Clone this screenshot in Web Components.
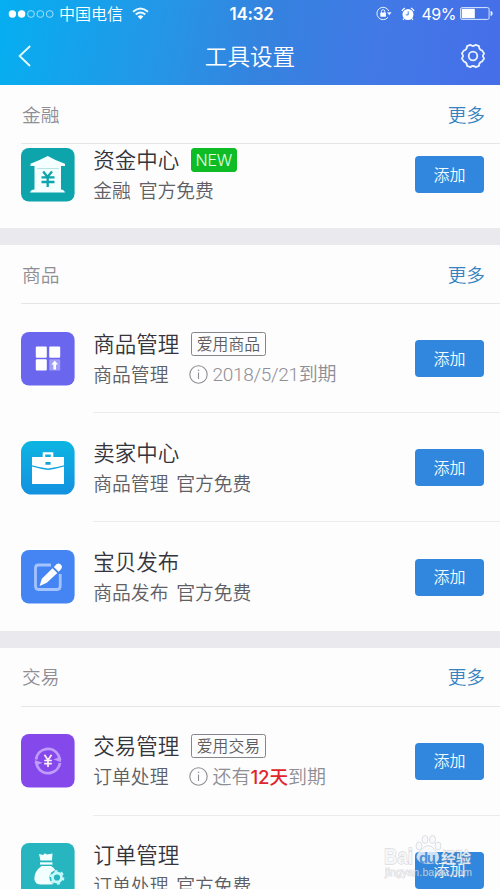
<!DOCTYPE html>
<html lang="zh-CN">
<head>
<meta charset="utf-8">
<title>工具设置</title>
<style>
html,body{margin:0;height:100%;overflow:hidden}
body{width:500px;height:889px;position:relative;background:#fdfdfd;font-family:"Noto Sans CJK SC DemiLight","Noto Sans CJK SC","Liberation Sans",sans-serif;font-weight:350}
main{height:889px;overflow:hidden}
</style>
</head>
<body>
<main>
<app-header heading="工具设置"></app-header>
<tool-section heading="金融">
  <tool-row icon="bank" heading="资金中心" sub="金融 官方免费" style="--top:4px;--h:84px" last><tool-badge slot="badge" solid>NEW</tool-badge></tool-row>
</tool-section>
<tool-section heading="商品">
  <tool-row icon="grid" heading="商品管理" sub="商品管理"><tool-badge slot="badge">爱用商品</tool-badge><expiry-note slot="note" style="letter-spacing:-.28px">2018/5/21到期</expiry-note></tool-row>
  <tool-row icon="case" heading="卖家中心" sub="商品管理 官方免费"></tool-row>
  <tool-row icon="edit" heading="宝贝发布" sub="商品发布 官方免费" style="--h:108.6px" last></tool-row>
</tool-section>
<tool-section heading="交易">
  <tool-row icon="trade" heading="交易管理" sub="订单处理" style="--top:27.3px;--h:109px"><tool-badge slot="badge">爱用交易</tool-badge><expiry-note slot="note">还有<b style="color:#e0252d;font:500 18.6px/30px Inter,'Noto Sans CJK SC',sans-serif;letter-spacing:-.1px">12天</b>到期</expiry-note></tool-row>
  <tool-row icon="bag" heading="订单管理" sub="订单处理 官方免费" style="--top:27.3px" last></tool-row>
</tool-section>
</main>
<water-mark></water-mark>
<script>
const define=(name,html,fill)=>customElements.define(name,class extends HTMLElement{
  connectedCallback(){
    if(this.shadowRoot)return;
    const t=document.createElement('template');
    t.innerHTML=html;
    const r=this.attachShadow({mode:'open'});
    r.append(t.content.cloneNode(true));
    r.querySelectorAll('[data-a]').forEach(e=>e.textContent=this.getAttribute(e.dataset.a)||'');
    if(fill)fill(this,r);
  }
});

define('status-bar',`<style>
:host{display:grid;grid-template-columns:1fr auto 1fr;align-items:center;height:28px;padding:0 3px 0 8px;color:#fff}
.l,.r{display:flex;align-items:center}.r{justify-content:flex-end}
svg{display:block;flex:none}
.c{font-size:16px;line-height:26px;padding-bottom:2px;margin-left:5px}
.t{font:600 17px/28px Inter,"Liberation Sans",sans-serif;letter-spacing:-.25px;margin-right:2px}
.p{font:400 16px/28px Inter,"Liberation Sans",sans-serif;margin:0 4px 0 7px;letter-spacing:-.5px}
</style>
<div class="l"><svg width="46" height="10" viewBox="0 0 46 10" fill="none" stroke="#c9efff" stroke-width=".8"><circle cx="4.4" cy="5" r="3.7" fill="#fff" stroke="none"/><circle cx="13.6" cy="5" r="3.7" fill="#fff" stroke="none"/><circle cx="23" cy="5" r="3.4"/><circle cx="32.3" cy="5" r="3.4"/><circle cx="41.7" cy="5" r="3.4"/></svg>
<span class="c">中国电信</span>
<svg style="margin:-2px 0 0 9px" width="17" height="13" viewBox="0 0 17 13" fill="none" stroke="#e6faff" stroke-width="1.9"><path d="M1 4.8Q8.5-1.8 16 4.8M3.7 7.5Q8.5 3.4 13.3 7.5"/><path d="M5.7 9.5Q8.5 7.2 11.3 9.5L8.5 12.4Z" fill="#fff" stroke="none"/></svg></div>
<span class="t">14:32</span>
<div class="r"><svg style="margin-top:-1px" width="16" height="15" viewBox="0 0 16 15" fill="none" stroke="#e8f3ff" stroke-width="1"><path d="M12.8 5A6.2 6.2 0 1 0 12 11.3"/><path d="M11 6.2h4.6l-2.3 3z" fill="#e8f3ff" stroke="none"/><rect x="4.3" y="6.6" width="5.6" height="4.2" rx=".5" fill="#fff" stroke="none"/><path d="M5.4 7V5.4a1.7 1.7 0 0 1 3.4 0V7"/></svg>
<svg style="margin:-1px 0 0 9px" width="14" height="14" viewBox="0 0 14 14"><circle cx="7" cy="7.5" r="5.5" fill="#fff"/><path d="M.9 4A7.6 7.6 0 0 1 4 1.1M10 1.1A7.6 7.6 0 0 1 13.1 4M3.3 11.4 2 13M10.7 11.4 12 13" stroke="#fff" stroke-width="1.1" fill="none"/><path d="M7.2 4.3v3.6H4.8" fill="none" stroke="#3f7fe2" stroke-width="1"/></svg>
<span class="p">49%</span>
<svg style="margin-top:-1px" width="37" height="13" viewBox="0 0 37 13"><rect x=".6" y=".6" width="28.5" height="11.8" rx="1.5" fill="none" stroke="#d8e8ff"/><rect x="1.8" y="1.8" width="13" height="9.4" fill="#fff"/><path d="M30.6 4.1q2 0 2 2.4t-2 2.4z" fill="#e8f3ff"/></svg></div>`);

define('app-header',`<style>
:host{display:flex;flex-direction:column;height:85px;background:linear-gradient(100deg,#05aff1 0%,#2794e6 35%,#3483df 52%,#4279e6 75%,#466ee9 100%);color:#fff}
.nav{height:57px;display:grid;grid-template-columns:1fr auto 1fr;align-items:center;padding:0 14px 0 18px}
svg{display:block;margin-top:-1px}.g{justify-self:end}
h1{font-size:22.6px;line-height:30px;font-weight:inherit;margin:0 4px 0 0;padding-bottom:2px}
</style><status-bar></status-bar><div class="nav"><svg width="14" height="22" viewBox="0 0 14 22" fill="none" stroke="#e7fbff" stroke-width="1.8"><path d="M12.2 1 1.6 11 12 21"/></svg><h1 data-a="heading"></h1><svg class="g" width="26" height="26" viewBox="0 0 26 26" fill="none" stroke="#e9f2ff" stroke-width="1.8" stroke-linejoin="round"><circle cx="13" cy="13" r="4.3"/><path d="M10.3 1.8Q13 4.1 15.7 1.8L19 3.2Q19 6.8 22.3 7.6L24.2 10.7Q21.6 13 24.2 15.3L22.3 18.4Q19 19.2 19 22.8L15.7 24.2Q13 21.9 10.3 24.2L7 22.8Q7 19.2 3.7 18.4L1.8 15.3Q4.4 13 1.8 10.7L3.7 7.6Q7 6.8 7 3.2Z"/></svg></div>`);

define('tool-section',`<style>
:host{display:block;border-bottom:17px solid #e9e9ee}
header{display:flex;justify-content:space-between;align-items:center;box-sizing:border-box;height:59px;margin-left:21px;padding:0 15px 1px 1px;font-size:18.7px;line-height:28px;color:#8e8e94;border-bottom:1px solid #e6e6e8}
.m{color:#3583c0}
</style><header><span data-a="heading"></span><span class="m">更多</span></header><slot></slot>`);

define('tool-badge',`<style>
:host{display:inline-flex;align-items:center;justify-content:center;box-sizing:border-box;height:24px;padding:0 5px 1px;border:1px solid #85858c;border-radius:2.5px;font-size:15.8px;line-height:20px;color:#5c5c63}
:host([solid]){background:#0ebc25;border-color:#0ebc25;color:#e4ffe5;font-family:Inter,sans-serif;font-size:16px;letter-spacing:-.2px;width:46px;padding:0;border-radius:3px}
</style><slot></slot>`);

define('expiry-note',`<style>
:host{display:inline-flex;align-items:center;color:#8e8e94;font-family:Roboto,"Noto Sans CJK SC",sans-serif;font-size:19px;line-height:30px;margin-left:21px;padding-top:2px;white-space:nowrap}
svg{margin-right:4px;margin-top:-2px}
</style><svg width="19" height="19" viewBox="0 0 19 19" fill="none" stroke="#8e8e94" stroke-width="1.1"><circle cx="9.5" cy="9.5" r="8.7"/><path d="M9.5 7.5v6.5"/><circle cx="9.5" cy="5.2" r=".8" fill="#8e8e94" stroke="none"/></svg><span><slot></slot></span>`);

define('add-button',`<style>
:host{display:flex;align-items:center;justify-content:center;box-sizing:border-box;width:69px;height:37px;padding-bottom:1.5px;border-radius:4px;background:#3087dd;color:#f1fbff;font-size:16px;line-height:24px}
</style><span>添加</span>`);

const icons={
bank:['#0da4ab','<g fill="#f4ffff"><path d="M26.8 8Q18 12.5 9.5 15.8V18H44v-2.2Q34 12.3 26.8 8Z"/><path d="M13.5 18H40V42H13.5Z"/><path d="M9 44.5q1-3 4-3h27q3 0 4 3Z"/></g><path d="M16 20.5h22" stroke="#b6e4e4" fill="none"/><path d="M22.2 23.5l4.3 5.5 4.5-5.5M20.5 29.3h13M20.5 34h13M26.7 28.5v10.5" stroke="#0da4ab" stroke-width="2.3" fill="none"/>'],
grid:['#6b66ee','<g fill="#fff"><rect x="14.8" y="14.5" width="11" height="11.3" rx="1"/><rect x="28.2" y="14.5" width="11" height="11.3" rx="1"/><rect x="14.8" y="27.3" width="11" height="11.3" rx="1"/></g><rect x="28.2" y="27.3" width="11" height="11.3" rx="1" fill="#a09df7"/><path d="M33.7 28.6l3.3 4h-2v4.8h-2.6v-4.8h-2z" fill="#fff"/>'],
case:['url(#g)','<defs><linearGradient id="g" x2="0" y2="1"><stop stop-color="#0cb5e2"/><stop offset="1" stop-color="#1391df"/></linearGradient></defs><path fill-rule="evenodd" d="M11 16H21.7V11.2H32.3V16H43V24.2Q35 26.5 27 27.6Q19 26.5 11 24.2ZM24.2 13.4V16H29.8V13.4Z" fill="#fff"/><path d="M11 25.4Q19 27.8 27 29Q35 27.8 43 25.4V43H11Z" fill="#fff"/><path d="M24.4 21.1h5.2v2.6h-5.2z" fill="#15a4d5"/>'],
edit:['#4484f3','<path d="M30 15H17.5q-3 0-3 3V36q0 3.5 3 3.5H36q3.2 0 3.2-3.5V24" fill="none" stroke="#a3c4ff" stroke-width="2.8"/><g fill="#fff"><path d="M32.8 17 35.5 14.2q2-1.6 4.2.4t.5 4.4L37.7 21.7Z"/><path d="M31.5 18.2 36.3 22.9 25.8 32.8 18.6 36 20.8 28.7Z"/></g>'],
trade:['#8548eb','<g stroke="#bf9cfb" stroke-width="2.8" fill="none"><path d="M15 25.5A12 12 0 0 1 37.5 21.3L39.2 26.5"/><path d="M39 29A12 12 0 0 1 16.5 32.7L14.8 27.5"/></g><path d="M40.3 28.2 32.5 25.5l6-2.5zM13.7 26 21.5 28.7l-6 2.5z" fill="#bf9cfb"/><path d="M23.5 20.7l3.5 5.4 3.5-5.4M23.2 26.5h7.6M23.2 29.6h7.6M27 26v7" stroke="#fff3f0" stroke-width="1.7" fill="none"/>'],
bag:['#27b5c0','<g fill="#f2ffff"><path d="M18 11l4 1 2-1.8 2 1.4 5.5-1.2L31 17.5H19.5Z"/><path d="M19 19.3h12.5v2.3H19Z"/><path d="M20.5 23H30Q35.5 26 37 34l-3 6q-2 1.5-5 1.5H20q-6 0-6.7-5.5-.3-7.5 7.2-13Z"/></g><circle cx="36" cy="34.5" r="7.6" fill="#27b5c0"/><circle cx="36" cy="34.5" r="4.5" fill="none" stroke="#c4f8fa" stroke-width="2.8"/><circle cx="36" cy="34.5" r="6.2" fill="none" stroke="#c4f8fa" stroke-width="2.4" stroke-dasharray="2.8 3.69"/>']};

define('app-icon',`<style>:host{display:block;width:54px;height:54px;flex:none}svg{display:block}</style><div></div>`,(el,r)=>{
  const [bg,body]=icons[el.getAttribute('name')];
  r.querySelector('div').innerHTML=`<svg width="54" height="54" viewBox="0 0 54 54"><rect width="53.6" height="53.6" rx="${bg[0]==='u'?11:8}" fill="${bg}"/>${body}</svg>`;
});

define('tool-row',`<style>
:host{display:flex;box-sizing:border-box;height:var(--h,109.2px);padding:var(--top,28px) 16px 0 21.3px;position:relative}
:host(:not([last]))::after{content:"";position:absolute;left:93px;right:0;bottom:0;height:1px;background:#ececee}
.i{width:54px;flex:none}
.x{flex:1;margin-left:18px;min-width:0}
.a,.b{display:flex;align-items:center;white-space:nowrap}
.a{height:24px;font-size:21.5px;line-height:24px;color:#34343c;gap:11.5px}
.a>span{padding-bottom:2px}
.b{height:30px;margin-top:3px;font-size:18.8px;line-height:30px;color:#5f5f66;word-spacing:3.6px}
add-button{margin-top:8.3px}
</style><div class="i"></div><div class="x"><div class="a"><span data-a="heading"></span><slot name="badge"></slot></div><div class="b"><span data-a="sub"></span><slot name="note"></slot></div></div><add-button></add-button>`,(el,r)=>{
  const i=document.createElement('app-icon');
  i.setAttribute('name',el.getAttribute('icon'));
  r.querySelector('.i').append(i);
});

define('water-mark',`<style>
:host{position:absolute;left:383px;top:834px;width:92px;height:46px;pointer-events:none}
svg{display:block}
text{font-family:"Liberation Sans","Noto Sans CJK SC",sans-serif;paint-order:stroke;stroke:rgba(140,140,145,.3);stroke-width:1.4px;fill:rgba(246,248,251,.85)}
</style><svg width="92" height="46" viewBox="0 0 92 46">
<g fill="rgba(246,248,251,.8)" stroke="rgba(150,150,155,.35)" stroke-width=".8"><ellipse cx="36" cy="12" rx="3" ry="4"/><ellipse cx="42" cy="5.5" rx="3" ry="4"/><ellipse cx="49.5" cy="5.5" rx="3" ry="4"/><ellipse cx="55" cy="12" rx="3" ry="4"/><path d="M45.5 11.5q4 0 6.5 5 4 2 4 7 0 6.5-10.5 6.5T33.5 23.5q0-5 5-7.5Q41 11.5 45.5 11.5Z"/></g>
<text x="1" y="29.5" font-size="21.5" font-weight="700" textLength="29" lengthAdjust="spacingAndGlyphs">Bai</text>
<text x="36" y="28.5" font-size="15" font-weight="700" style="fill:#4b91da;stroke:none" textLength="17">du</text>
<text x="58" y="28.5" font-size="15" font-weight="700" textLength="30">经验</text>
<text x="2" y="41.5" font-size="10.5" textLength="87" style="stroke-width:.9px;fill:rgba(246,248,251,.6)">jingyan.baidu.com</text></svg>`);
</script>
</body>
</html>
